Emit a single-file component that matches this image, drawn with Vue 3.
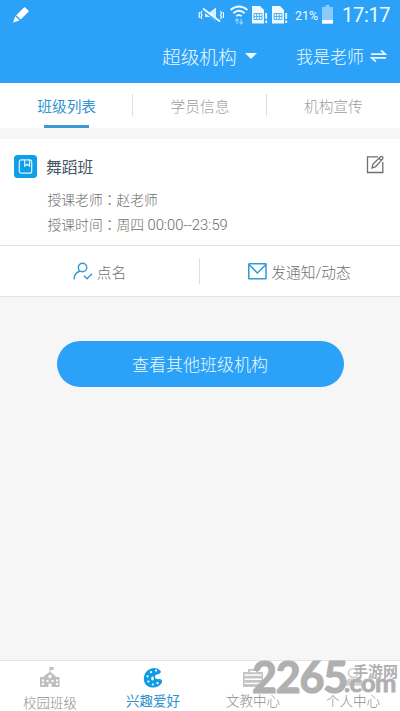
<script setup>
const tabs = ['班级列表', '学员信息', '机构宣传']
const navItems = [
  { label: '校园班级', icon: 'school' },
  { label: '兴趣爱好', icon: 'palette', active: true },
  { label: '文教中心', icon: 'desk' },
  { label: '个人中心', icon: 'user' }
]
const paletteHoles = [[8, 5.2], [13, 3.6], [4.6, 9.3], [5.4, 14.5], [9.8, 17.5], [14.5, 16.2]]
</script>

<template>
  <div class="screen">
    <header class="header">
      <div class="status">
        <svg class="pencil" width="18" height="18" viewBox="0 0 18 18" fill="#fff">
          <path d="M4.2 9.2 12 1.6q.7-.6 1.3 0l3 3q.6.7 0 1.3L8.6 13.4zM3.3 10.2l4.2 4.2L1 16.5z" />
        </svg>
        <svg class="mute" width="27" height="18" viewBox="0 0 27 18" fill="none" stroke="#eefaff">
          <path d="M7 6h5l6-4.5v14L12 11H7z" fill="#d9f1ff" stroke="none" />
          <path d="M5 4.6l16 12" stroke="#2ba1f7" stroke-width="1.6" />
          <path d="M5 2.5l17 13" stroke-width="1.9" />
          <path d="M4 5l-1 2 1 2-1 2 1 2M1.3 6v6M22.5 5l1 2-1 2 1 2-1 2M25.4 6v6" stroke-width="1.2" />
        </svg>
        <svg class="wifi" width="20" height="20" viewBox="0 0 20 20" fill="none" stroke="#eefaff" stroke-width="1.8">
          <path d="M1.5 5q8.5-7 17 0M4.3 8.2q5.7-5 11.4 0M7.2 11.2q2.8-2.5 5.6 0" />
          <path d="M8 19v-5M6.3 16l1.7-2 1.7 2M12.2 14v5M10.5 17l1.7 2 1.7-2" stroke="#8fd0ff" stroke-width="1.3" />
        </svg>
        <svg v-for="n in 2" :key="n" class="sim" width="17" height="18" viewBox="0 0 17 18">
          <path d="M1 0h8l4 4v13.5H1z" fill="#effaff" />
          <path d="M3 7.5h8v6H3zM5.6 7.5v6M8.3 7.5v6M3 10.5h8" fill="none" stroke="#55b2f3" />
          <path d="M15.2 7v6M15.2 14.5V17" stroke="#effaff" stroke-width="1.8" />
        </svg>
        <span class="percent">21%</span>
        <svg class="battery" width="11" height="19" viewBox="0 0 11 19">
          <path d="M3.5 0h4v2H11v17H0V2h3.5z" fill="#8bcafa" />
          <path d="M0 15h11v3.5H0z" fill="#fff" />
        </svg>
        <span class="clock">17:17</span>
      </div>
      <div class="titlebar">
        <div class="org"><span>超级机构</span><i class="caret"></i></div>
        <div class="role">
          <span>我是老师</span>
          <svg width="17" height="14" viewBox="0 0 17 14" fill="none" stroke="#e9f8ff" stroke-width="1.7">
            <path d="M1 5.2h14.5L11 1.3M16 8.8H1.5L6 12.7" />
          </svg>
        </div>
      </div>
    </header>

    <nav class="tabs">
      <div v-for="(tab, i) in tabs" :key="tab" class="tab" :class="{ active: i === 0 }"><span>{{ tab }}</span></div>
    </nav>

    <section class="card">
      <div class="info">
        <svg class="book" width="23" height="23" viewBox="0 0 23 23">
          <rect width="23" height="23" rx="3.5" fill="#109ee8" />
          <g fill="none" stroke="#dff5ff" stroke-width="1.2">
            <rect x="5.3" y="4.8" width="12.4" height="13.4" rx="2" />
            <path d="M10.7 5v6l2.4-1.8 2.4 1.8V5" />
          </g>
        </svg>
        <div class="details">
          <h2>舞蹈班</h2>
          <p>授课老师<span class="colon">：</span>赵老师</p>
          <p>授课时间<span class="colon">：</span>周四 <span class="time">00:00--23:59</span></p>
        </div>
        <svg class="edit" width="19" height="19" viewBox="0 0 19 19" fill="none" stroke="#6b6f73" stroke-width="1.3">
          <path d="M12 1.8H1.5v15.7h15.3V7" />
          <path d="M6 13l1-4 7.5-7.3q1-.7 2 .2t.2 2L9.6 11.6zM13 3.2l2.5 2.5" />
        </svg>
      </div>
      <div class="actions">
        <div class="action">
          <svg width="20" height="19" viewBox="0 0 20 19" fill="none" stroke="#3199d4" stroke-width="1.4">
            <circle cx="9.5" cy="5.5" r="4.2" />
            <path d="M1 17.5q.2-7 6-8.3M11 13.7l3 3 5-5" />
          </svg>
          <span>点名</span>
        </div>
        <div class="action message">
          <svg width="19" height="17" viewBox="0 0 19 17" fill="none" stroke="#3199d4" stroke-width="1.5">
            <rect x=".8" y=".8" width="17.2" height="15" rx=".5" />
            <path d="M1 1.5 9.4 10 18 1.5" />
          </svg>
          <span>发通知/动态</span>
        </div>
      </div>
    </section>

    <main class="content"><button class="browse">查看其他班级机构</button></main>

    <footer class="bottom">
      <div v-for="item in navItems" :key="item.label" class="nav-item" :class="{ active: item.active }">
        <svg v-if="item.icon === 'school'" width="20" height="21" viewBox="0 0 20 21" fill="#bfbfbf">
          <path d="M9.5 0h4v3h-3v2l5 4v1h4v10H0V10h4V9l5.5-4z" />
          <g fill="#fff"><circle cx="10" cy="9.5" r="1.7" /><path d="M2 12.5h2v2H2zM2 16h2v2H2zM16 12.5h2v2h-2zM16 16h2v2h-2zM6.5 13h2v2h-2zM11.5 13h2v2h-2zM8.5 16.5h3V20h-3z" /></g>
        </svg>
        <svg v-else-if="item.icon === 'palette'" width="20" height="21" viewBox="0 0 20 21">
          <path d="M17.3 3.5C14 0 8.5 0 4.5 3.5-.5 8-.3 15.8 4.5 19c4.5 3 12.5 1.3 14.3-3.5.8-2.6-.7-3.7-3-3.4-2.2.4-4-.6-3.8-2.6.2-1.7 1.6-2 3.3-2.3 2.2-.3 3.2-2.2 2-3.7z" fill="#109be7" />
          <circle v-for="(hole, i) in paletteHoles" :key="i" :cx="hole[0]" :cy="hole[1]" r="1.1" fill="#fff" />
          <ellipse cx="9.5" cy="11.5" rx="1.3" ry="1.9" fill="#fff" />
        </svg>
        <svg v-else-if="item.icon === 'desk'" width="20" height="21" viewBox="0 0 20 21">
          <path d="M0 5h5V2h10v3h5v15H0z" fill="#c4c4c4" />
          <path d="M7 4.5h6M1.5 8h17M1.5 12.2h17M1.5 16.4h17" stroke="#fff" stroke-width="1.4" />
        </svg>
        <svg v-else width="20" height="21" viewBox="0 0 20 21" fill="none" stroke="#d0d0d0" stroke-width="1.7">
          <circle cx="10" cy="6" r="4.5" /><path d="M1 18q1-6 9-6t9 6z" fill="#d0d0d0" />
        </svg>
        <span>{{ item.label }}</span>
      </div>
      <div class="mark">
        <span class="mark-number">2265</span>
        <span class="mark-name">手游网</span>
        <span class="mark-domain">.com</span>
      </div>
    </footer>
  </div>
</template>

<style>
body { margin: 0; }
</style>

<style scoped>
.screen { width: 400px; height: 711px; display: flex; flex-direction: column; overflow: hidden; background: #f6f6f6; font-family: Roboto, "Noto Sans CJK SC", sans-serif; font-weight: 300; }
svg { display: block; flex: none; }
.header { height: 83px; background: #2ba1f7; color: #f1fbff; flex: none; }
.status { height: 30px; display: flex; align-items: center; }
.pencil { margin-left: 12px; }
.mute { margin-left: 168px; }
.wifi { margin-left: 4px; margin-right: 2px; }
.sim { margin-right: 3px; }
.percent { font-size: 12.5px; width: 27px; margin-left: 4px; font-weight: 400; white-space: nowrap; }
.battery { margin-right: 9px; margin-top: -2px; }
.clock { font-size: 20px; font-weight: 400; letter-spacing: -.3px; }
.titlebar { height: 51px; display: flex; align-items: center; justify-content: space-between; padding: 0 13px 0 162px; }
.org { display: flex; align-items: center; font-size: 18.7px; gap: 8px; }
.caret { border: 6px solid transparent; border-top: 6px solid #eefaff; border-bottom: 0; }
.role { display: flex; align-items: center; font-size: 17px; gap: 6px; }
.tabs { height: 44.5px; flex: none; display: flex; background: #fff; }
.tab { flex: 1; position: relative; display: flex; align-items: center; justify-content: center; font-size: 14.7px; color: #9b9b9b; }
.tab + .tab::before { content: ""; position: absolute; left: -1px; top: 11px; width: 1px; height: 22px; background: #dedede; }
.tab.active { color: #3294cf; font-weight: 400; }
.tab.active::after { content: ""; position: absolute; bottom: 0; left: 44px; width: 45px; height: 2.5px; background: #3b98d4; }
.card { height: 157.5px; margin-top: 11.5px; flex: none; background: #fff; border-bottom: 1px solid #e3e3e3; box-sizing: border-box; }
.info { height: 107px; display: flex; border-bottom: 1px solid #e3e3e3; padding: 0 15px 0 14px; box-sizing: border-box; }
.book { margin-top: 16px; }
.details { flex: 1; padding: 17px 0 0 9px; }
h2 { margin: 0 0 8px; font-size: 15.8px; line-height: 24px; font-weight: 400; color: #445564; }
p { margin: 0 0 0 1.5px; font-size: 13.8px; line-height: 25px; color: #6c6c6c; }
.colon { font-family: "Noto Sans CJK TC", sans-serif; line-height: 1; }
.time { font-size: 14.8px; line-height: 1; }
.edit { margin-top: 16px; }
.actions { display: flex; height: 49px; }
.action { flex: 1; display: flex; align-items: center; justify-content: center; gap: 4px; font-size: 14.7px; color: #707070; position: relative; padding: 1px 1px 0 0; }
.message::before { content: ""; position: absolute; left: -1px; top: 12px; width: 1px; height: 26px; background: #dedede; }
.content { flex: 1; display: flex; justify-content: center; padding-top: 44px; align-items: flex-start; }
.browse { width: 287px; height: 46px; border: 0; border-radius: 23px; padding: 0; background: #2ba1f7; color: #e9fbff; font: inherit; font-size: 17px; }
.bottom { height: 51px; flex: none; display: flex; background: #fff; border-top: 1px solid #e4e4e4; box-sizing: border-box; position: relative; }
.nav-item { flex: none; width: 106px; padding-top: 6px; display: flex; flex-direction: column; align-items: center; font-size: 13.5px; line-height: 19px; color: #8e8e8e; gap: 6px; }
.nav-item:first-child { width: 100px; }
.nav-item.active { color: #2c91d0; gap: 4px; font-weight: 400; }
.nav-item:nth-child(3) { width: 94px; gap: 4px; }
.nav-item:nth-child(4) { gap: 4px; }
.mark { position: absolute; left: 252px; top: 1px; width: 148px; height: 36px; color: #b0b0b0; font-family: Lato, "Noto Sans CJK SC", sans-serif; font-weight: 700; }
.mark span { position: absolute; white-space: nowrap; }
.mark-number { left: 0; top: -3px; font-size: 43px; line-height: 36px; letter-spacing: -1.2px; -webkit-text-stroke: 1.2px #b0b0b0; }
.mark-name { left: 101px; top: 1px; font-size: 15px; line-height: 17px; }
.mark-domain { left: 92px; top: 8px; font-size: 25.5px; line-height: 24px; letter-spacing: -.6px; -webkit-text-stroke: .8px #b0b0b0; }
</style>
